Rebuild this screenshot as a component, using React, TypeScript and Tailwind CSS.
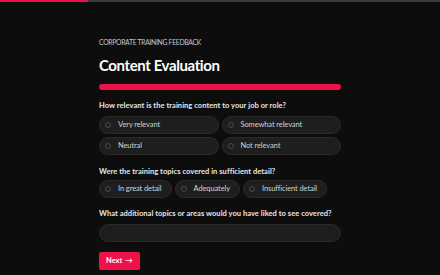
import { useState } from "react";

const q1 = ["Very relevant", "Somewhat relevant", "Neutral", "Not relevant"];
const q2 = ["In great detail", "Adequately", "Insufficient detail"];

const Radio = ({ label }: { label: string }) => (
  <label className="flex h-[18px] items-center gap-[7px] rounded-full border border-[#2a2a2a] bg-[#1e1e1e] pl-[5px] pr-[9px] text-[7.5px] tracking-[-0.1px] text-[#d2d2d2]">
    <span className="h-[6px] w-[6px] shrink-0 rounded-full border border-[#4a4a4a]" />
    <span className="whitespace-nowrap">{label}</span>
  </label>
);

export default function App() {
  const [topics, setTopics] = useState("");

  return (
    <div className="h-[275px] w-[440px] overflow-hidden bg-[#0d0d0d]" style={{ fontFamily: "Lato, 'Noto Sans', sans-serif" }}>
      {/* progress */}
      <div className="flex h-[2px] w-full bg-[#3a3a3a]">
        <div className="h-full w-[88px] bg-[#f0104a]" />
      </div>

      <div className="mx-auto w-[242px] pt-[35px]">
        <p className="text-[6.8px] uppercase leading-[10px] tracking-[-0.3px] text-[#c8c8c8]">Corporate Training Feedback</p>
        <h1 className="mt-[8px] text-[15px] font-bold leading-[20px] tracking-[-0.4px] text-white">Content Evaluation</h1>
        <div className="mt-[9px] h-[6px] w-full rounded-full bg-[#f0104a]" />

        <p className="mt-[10px] text-[7.5px] font-bold leading-[11px] tracking-[0.05px] text-[#e6e6e6]">How relevant is the training content to your job or role?</p>
        <div className="mt-[5px] grid grid-cols-2 gap-[3px]">
          {q1.map((o) => (
            <Radio key={o} label={o} />
          ))}
        </div>

        <p className="mt-[11px] text-[7.5px] font-bold leading-[11px] tracking-[0.05px] text-[#e6e6e6]">Were the training topics covered in sufficient detail?</p>
        <div className="mt-[3px] flex gap-[3px]">
          {q2.map((o) => (
            <Radio key={o} label={o} />
          ))}
        </div>

        <p className="mt-[10px] whitespace-nowrap text-[7.5px] font-bold leading-[11px] tracking-[0.05px] text-[#e6e6e6]">What additional topics or areas would you have liked to see covered?</p>
        <input
          value={topics}
          onChange={(e) => setTopics(e.target.value)}
          className="mt-[5px] block h-[18px] w-full rounded-full border border-[#2a2a2a] bg-[#1e1e1e] px-[8px] text-[8px] text-white outline-none"
        />

        <button className="mt-[10px] flex h-[18px] items-center gap-[3px] rounded-[2px] bg-[#f0104a] px-[7px] text-[7.5px] font-bold text-white">
          Next <span>→</span>
        </button>
      </div>
    </div>
  );
}
